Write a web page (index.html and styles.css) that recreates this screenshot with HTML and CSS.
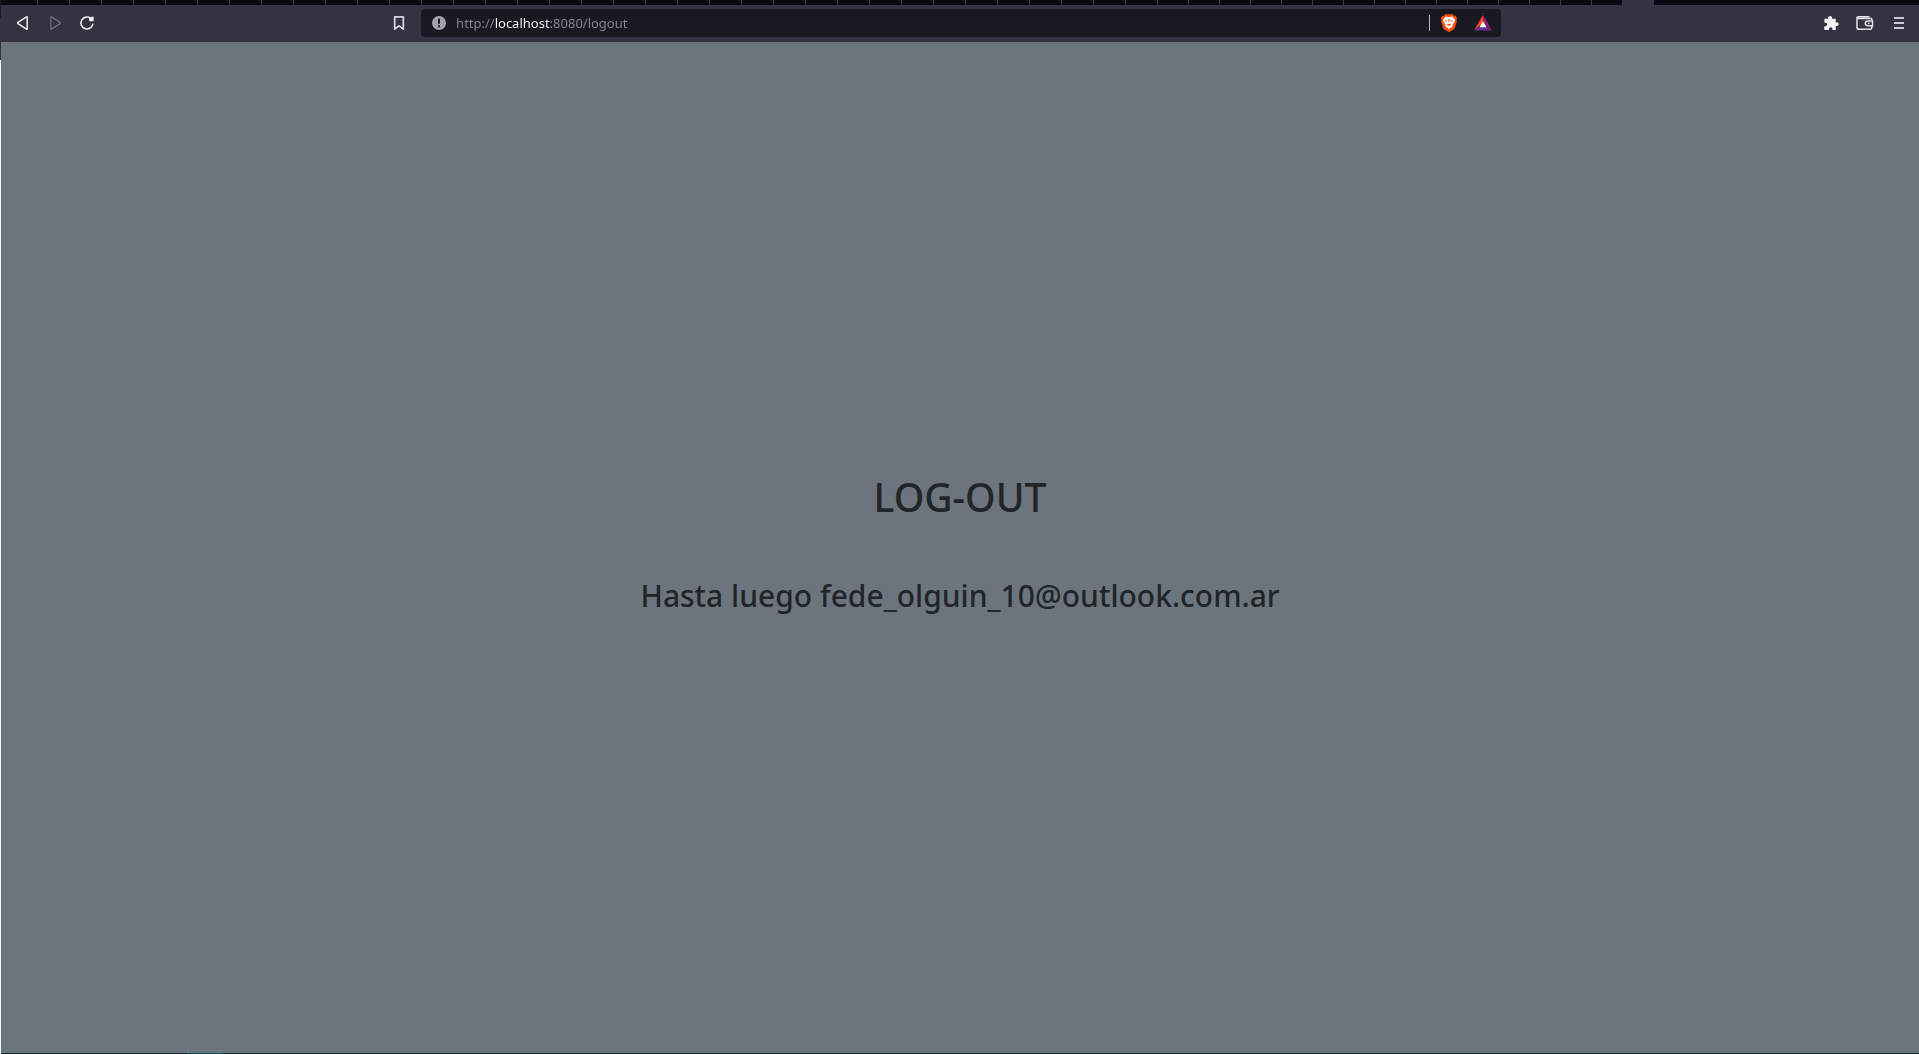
FILE: index.html
```html
<!DOCTYPE html>
<html lang="es">
<head>
<meta charset="utf-8">
<title>Log-out</title>
<link rel="stylesheet" href="styles.css">
</head>
<body>
<div class="edge"></div>
<div class="window">
  <header class="browser">
    <div class="tabs">
      <div class="tabs-wide"></div>
      <div class="tabs-narrow"></div>
      <div class="tab-active"></div>
    </div>
    <div class="toolbar">
      <div class="group nav">
        <button class="tool" aria-label="Atrás"><svg width="16" height="16" viewBox="0 0 16 16"><path d="M12.2 2.2v11.6Q12.2 14.6 11.5 14.1L3 8.6Q2.2 8 3 7.4L11.5 1.9Q12.2 1.4 12.2 2.2Z" fill="none" stroke="#eeeeee" stroke-width="1.5"/></svg></button>
        <button class="tool" aria-label="Adelante" disabled><svg width="16" height="16" viewBox="0 0 16 16"><path d="M3.8 2.2v11.6Q3.8 14.6 4.5 14.1L13 8.6Q13.8 8 13 7.4L4.5 1.9Q3.8 1.4 3.8 2.2Z" fill="none" stroke="#6b6d7a" stroke-width="1.3"/></svg></button>
        <button class="tool" aria-label="Recargar"><svg width="16" height="16" viewBox="0 0 16 16"><path d="M13.8 9.4A6 6 0 1 1 11.6 3.2" fill="none" stroke="#eeeeee" stroke-width="1.6" stroke-linecap="round"/><path d="M10 2.2L14.6 1.6V6.2H10.2Z" fill="#eeeeee"/></svg></button>
        <button class="tool bookmark" aria-label="Marcador"><svg width="16" height="16" viewBox="0 0 16 16"><path d="M3.7 1.8h8.6v12.4L8 10.9l-4.3 3.3Z" fill="none" stroke="#d9d9dc" stroke-width="1.7" stroke-linejoin="round"/></svg></button>
      </div>
      <div class="address">
        <svg width="14" height="14" viewBox="0 0 14 14"><circle cx="7" cy="7" r="7" fill="#a0a3ad"/><path d="M6 2.8h2v5H6zM6 9.2h2v2H6z" fill="#181a21"/></svg>
        <input class="url" type="text" aria-label="Dirección" value="http://localhost:8080/logout">
        <span class="divider"></span>
        <button class="tool" aria-label="Brave Shields"><svg width="18" height="18" viewBox="0 0 18 18"><path d="M5.2 0.3h7.6l1.5 1.6 1.4-.1 1.4 2.5-.6 1.7.4 1.2-2 6.6-1.1 1.6L9 18l-4.8-2.6-1.1-1.6-2-6.6.4-1.2L.9 4.3l1.4-2.5 1.4.1Z" fill="#fb4f0b"/><path d="M6 2.6l3 .6 3-.6 3 2.9-.5 2.5-2 2.4.3 1.6L9 14.9 5.200 12l.3-1.600-2-2.400L3 5.500Z" fill="#fff"/><path d="M4.500 6l2.800.8-.6 1.300ZM13.500 6l-2.800.8.6 1.300ZM8.300 5h1.400L9.400 8.500h-.8ZM6.500 10.500L9 9.700l2.500.8L9 12Z" fill="#fb4f0b"/></svg></button>
        <button class="tool" aria-label="Brave Rewards"><svg width="18" height="18" viewBox="0 0 18 18"><path d="M9 1L0 16.500L9 9Z" fill="#ff4724"/><path d="M9 1L18 16.500L9 9Z" fill="#9e1f63"/><path d="M0 16.500L5 13h8l5 3.500Z" fill="#662d91"/><path d="M9 7.200L12.600 13.200H5.400Z" fill="#fff"/></svg></button>
      </div>
      <div class="group actions">
        <button class="tool" aria-label="Extensiones"><svg width="16" height="16" viewBox="0 0 16 16"><path d="M1.500 3.800h3.700C4.500 0 9.700 0 9 3.800h3.700v3.500c4-.4 4 4.200 0 3.800v4H9.500c.4-3.700-4-3.700-3.600 0H1.300v-3.800c3.700.3 3.700-4 0-3.700Z" fill="#f2f2f2"/></svg></button>
        <button class="tool" aria-label="Cartera"><svg width="18" height="16" viewBox="0 0 18 16"><path d="M15.800 5V4Q15.800 3.500 15.200 3.500H2.500Q1 3.500 1 2.600 1 1.700 2.500 1.700H13.500M1 2.600V12.500Q1 14.300 2.800 14.300H14.200Q15.800 14.300 15.800 12.800V11M16.500 6H12Q9.300 6 9.300 8.300 9.300 10.700 12 10.700H16.500ZM12 8.300h1.500" fill="none" stroke="#e4e4e7" stroke-width="1.500"/></svg></button>
        <button class="tool" aria-label="Menú"><svg width="16" height="16" viewBox="0 0 16 16"><path d="M3 3h10M3 8h10M3 13h10" stroke="#c9cad0" stroke-width="2"/></svg></button>
      </div>
    </div>
  </header>
  <main class="page">
    <h1>LOG-OUT</h1>
    <h2>Hasta luego fede_olguin_10@outlook.com.ar</h2>
  </main>
  <footer class="taskbar"></footer>
</div>
</body>
</html>
```
FILE: styles.css
```css
* { box-sizing: border-box; }

body {
  margin: 0;
  min-height: 100vh;
  display: flex;
  background: #6c757d;
  color: #212529;
  font-family: "Segoe UI", "Noto Sans", sans-serif;
}

.edge {
  width: 1px;
  background: linear-gradient(#1c1c1f 18px, #353331 18px, #353331 60px, #f4f4f4 60px);
}

.window {
  flex: 1;
  display: flex;
  flex-direction: column;
}

.tabs {
  display: flex;
  height: 5px;
  padding-left: 5px;
  background: #0a0a14;
}

.tabs-wide {
  width: 1152px;
  background: repeating-linear-gradient(90deg, transparent 0 31px, #3a3a3e 31px 32px);
}

.tabs-narrow {
  width: 464px;
  background: repeating-linear-gradient(90deg, transparent 0 30px, #3a3a3e 30px 31px);
}

.tab-active {
  width: 32px;
  background: #323443;
}

.toolbar {
  display: flex;
  align-items: center;
  height: 37px;
  padding-bottom: 1px;
  background: #323443;
}

.group {
  flex: 1;
  display: flex;
  align-items: center;
  padding: 0 14px;
}

.nav { gap: 16px; }

.bookmark { margin-left: auto; }

.actions {
  justify-content: flex-end;
  gap: 17px;
  padding: 0 12px 0 14px;
}

.tool {
  display: flex;
  padding: 0;
  border: 0;
  background: none;
}

.address {
  width: 56.300%;
  height: 28px;
  display: flex;
  align-items: center;
  gap: 10px;
  padding: 0 9px 0 11px;
  border-radius: 4px;
  background: #181a21;
}

.address .tool + .tool { margin-left: 6px; }

.url {
  flex: 1;
  min-width: 0;
  height: 20px;
  padding: 0;
  border: 0;
  outline: 0;
  font: 13px/20px "Segoe UI", "Noto Sans", sans-serif;
  color: transparent;
  background: linear-gradient(90deg, #85888f 39px, #ffffff 39px, #ffffff 94px, #85888f 94px);
  -webkit-background-clip: text;
  background-clip: text;
}

.divider {
  width: 1px;
  height: 16px;
  background: #b4b5b9;
}

.page {
  flex: 1;
  display: flex;
  flex-direction: column;
  align-items: center;
  justify-content: center;
  gap: 56px;
  padding-bottom: 8px;
}

h1, h2 {
  margin: 0;
  font-weight: 500;
}

h1 { font-size: 39px; line-height: 48px; }

h2 { font-size: 30px; line-height: 38px; }

.taskbar {
  height: 1px;
  background: linear-gradient(90deg, #14282e 186px, #0c4f55 186px, #0c4f55 222px, #14282e 222px);
}
```
